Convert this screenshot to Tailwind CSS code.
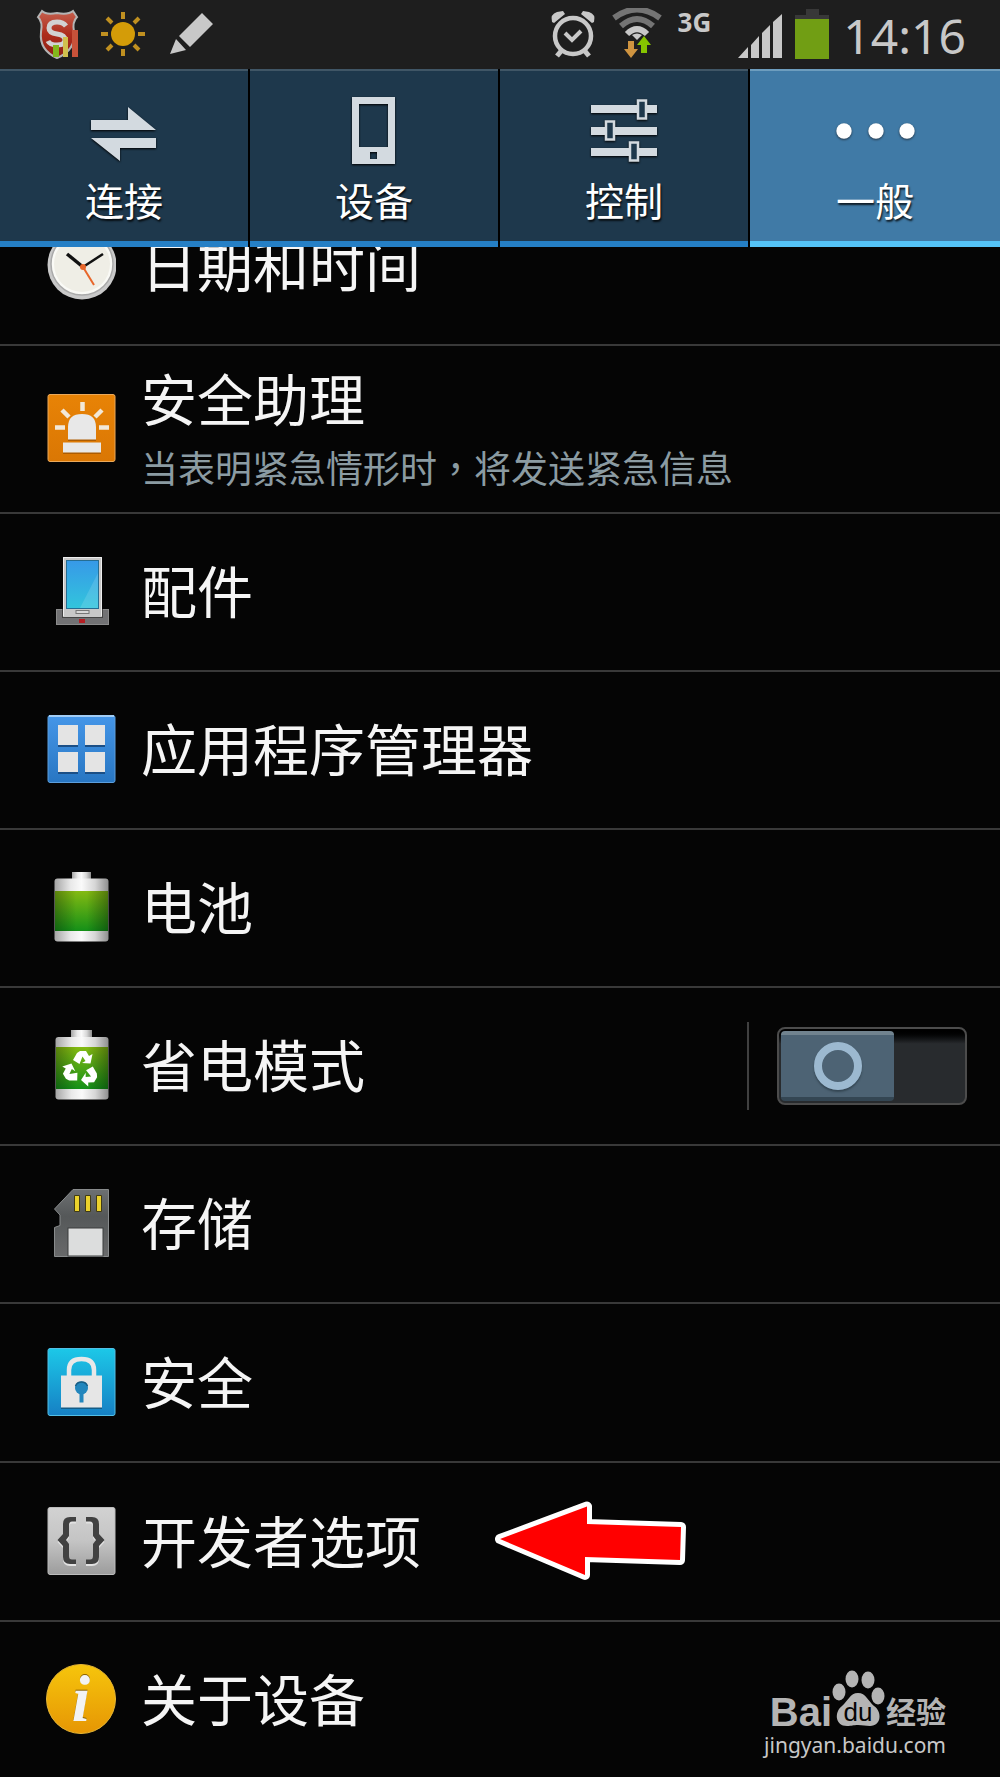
<!DOCTYPE html>
<html lang="zh-CN">
<head>
<meta charset="utf-8">
<meta name="viewport" content="width=device-width, initial-scale=1">
<title>设置</title>
<script src="https://cdn.jsdelivr.net/npm/@tailwindcss/browser@4"></script>
</head>
<body class="bg-[#050505] text-[#f5f5f5] font-['Noto_Sans','Noto_Sans_CJK_SC',sans-serif]">
<div class="relative min-h-screen overflow-hidden">

<!-- Status bar -->
<header class="flex h-[69px] items-start justify-between bg-[#1e1e1e] pl-9 pr-[34px] text-[#c8c8c8]">
  <div class="flex items-center gap-5 pt-2">
    <svg class="h-[52px] w-11" viewBox="0 0 44 52" aria-hidden="true">
      <defs><linearGradient id="shield" x1="0" y1="0" x2="0" y2="1"><stop offset="0" stop-color="#c5604e"/><stop offset=".5" stop-color="#ad2c1c"/><stop offset="1" stop-color="#8c2015"/></linearGradient></defs>
      <path d="M6 3 Q10 7 21 5 Q32 7 37 3 L41 9 Q36 14 38 24 Q40 42 21 50 Q3 42 5 24 Q7 14 2 9Z" fill="url(#shield)" stroke="#b4b4b4" stroke-width="2"/>
      <path d="M30 18 Q27 14 21 14 Q13 14 13 20 Q13 25 21 26 Q29 27 29 32 Q29 37 21 37 Q14 37 12 33" fill="none" stroke="#d2d2d2" stroke-width="5"/>
      <path d="M17 37h6v12h-6z" fill="#83b81c"/><path d="M27 29h5v20h-5z" fill="#d0c04e"/><path d="M36 22h6v27h-6z" fill="#c8523a"/>
    </svg>
    <svg class="h-[52px] w-12" viewBox="0 0 48 52" aria-hidden="true">
      <circle cx="23" cy="26" r="12" fill="#d49c08"/>
      <path d="M23 4v7M23 41v7M1 26h7M38 26h7M7 10l5 5M34 37l5 5M7 42l5-5M34 15l5-5" stroke="#c09020" stroke-width="4"/>
    </svg>
    <svg class="h-[52px] w-12" viewBox="0 0 48 52" aria-hidden="true">
      <path d="M34 5 45 16 22 39 11 28ZM8 31 18 42 2 46Z" fill="#c8c8c8"/>
    </svg>
  </div>
  <div class="flex items-start pt-2">
    <svg class="h-[52px] w-12" viewBox="0 0 48 52" fill="none" stroke="#c8c8c8" aria-hidden="true">
      <circle cx="25" cy="28" r="18" stroke-width="4.500"/>
      <path d="M17 25l7 7 9-9" stroke-width="4"/>
      <path d="M14 42l-5 6M36 42l5 6" stroke-width="5"/>
      <path d="M4 14Q2 6 9 4l6-1 2 3L6 15ZM46 14Q48 6 41 4l-6-1-2 3 11 9Z" fill="#c8c8c8" stroke="none"/>
    </svg>
    <svg class="ml-4 h-[52px] w-[50px]" viewBox="0 0 50 52" fill="none" aria-hidden="true">
      <path d="M2 10Q25-7 48 10" stroke="#747474" stroke-width="6"/>
      <path d="M9 18Q25 4 41 18" stroke="#747474" stroke-width="6"/>
      <path d="M15 26Q25 16 35 26" stroke="#c8c8c8" stroke-width="6"/>
      <path d="M20 27Q25 24 30 27L25 32Z" fill="#c8c8c8"/>
      <path d="M16 33h6v8h4l-7 9-7-9h4z" fill="#cf9440"/>
      <path d="M32 28l7 9h-4v8h-6v-8h-4z" fill="#86c400"/>
    </svg>
    <span class="ml-4 text-[26px] leading-7 font-bold">3G</span>
    <svg class="ml-6 h-[52px] w-12" viewBox="0 0 48 52" fill="#c8c8c8" aria-hidden="true">
      <path d="M3 50 13 39v11ZM16 37 24 28v22h-8ZM27 25 35 17v33h-8ZM38 14 47 6v44h-9Z"/>
    </svg>
    <svg class="ml-3 h-[52px] w-9" viewBox="0 0 36 52" aria-hidden="true">
      <path d="M11 1h13v6h10v4H0V7h11z" fill="#383838"/><path d="M0 11h34v40H0z" fill="#719e14"/>
    </svg>
    <time class="ml-3 text-[48px] leading-[56px]">14:16</time>
  </div>
</header>

<!-- Tabs -->
<nav class="relative z-10 bg-black text-center text-[39px] leading-[48px] text-white text-shadow-[1px_2px_2px_rgb(0_0_0/0.8)]">
  <ul class="grid h-[178px] grid-cols-4">
    <li class="pr-0.5">
      <a href="#connect" class="flex h-full flex-col items-center gap-3 border-t-2 border-b-6 border-t-[#405666] border-b-[#257fc5] bg-[#1e384c] pt-[26px]">
        <svg class="size-[68px] drop-shadow-[0_1px_1px_black]" viewBox="0 0 68 68" fill="#d3dae0" aria-hidden="true"><path d="M1 23h37V10l28 23H1ZM66 41v10H30v13L1 41Z"/></svg>
        <span>连接</span>
      </a>
    </li>
    <li class="pr-0.5">
      <a href="#device" class="flex h-full flex-col items-center gap-3 border-t-2 border-b-6 border-t-[#405666] border-b-[#257fc5] bg-[#1e384c] pt-[26px]">
        <svg class="size-[68px] drop-shadow-[0_1px_1px_black]" viewBox="0 0 68 68" fill="#d3dae0" fill-rule="evenodd" aria-hidden="true"><path d="M12 0h43v67H12ZM19 7v43h29V7ZM30 55v7h7v-7Z"/></svg>
        <span>设备</span>
      </a>
    </li>
    <li class="pr-0.5">
      <a href="#control" class="flex h-full flex-col items-center gap-3 border-t-2 border-b-6 border-t-[#405666] border-b-[#257fc5] bg-[#1e384c] pt-[26px]">
        <svg class="size-[68px] drop-shadow-[0_1px_1px_black]" viewBox="0 0 68 68" aria-hidden="true">
          <path d="M1 8h66v8H1ZM1 30h66v8H1ZM1 51h66v8H1Z" fill="#d3dae0"/>
          <path d="M48 3.500h8v18h-8ZM16 24.500h8v18h-8ZM40 45.500h8v18h-8Z" fill="#1e384c" stroke="#d3dae0" stroke-width="2.500"/>
        </svg>
        <span>控制</span>
      </a>
    </li>
    <li>
      <a href="#general" aria-current="page" class="flex h-full flex-col items-center gap-3 border-t-2 border-b-6 border-t-[#6d9dbe] border-b-[#55c3f6] bg-[#407aa6] pt-[26px]">
        <svg class="h-[68px] w-20 drop-shadow-[0_1px_1px_#234]" viewBox="0 0 80 68" fill="#fff" aria-hidden="true"><circle cx="9" cy="34" r="7.700"/><circle cx="41" cy="34" r="7.700"/><circle cx="72" cy="34" r="7.700"/></svg>
        <span>一般</span>
      </a>
    </li>
  </ul>
</nav>

<!-- Settings list, scrolled so that its first row is partly under the tabs -->
<main>
<ul class="-mt-[59px] text-[56px] leading-[80px]">
  <li class="border-b-2 border-[#393939]">
    <a href="#date" class="flex h-[156px] items-center gap-[25px] pb-0.5 pl-[46px]">
      <svg class="size-[70px]" viewBox="0 0 70 70" aria-hidden="true">
        <circle cx="36" cy="35" r="34.500" fill="#c9c9c9"/><circle cx="36" cy="34" r="31" fill="#fafaf6" stroke="#aaa" stroke-width="1.500"/><circle cx="36" cy="34" r="28" fill="#efeee6"/>
        <path d="M21 24 37 37" stroke="#111" stroke-width="3.500"/><path d="M37 37 57 24" stroke="#111" stroke-width="2.500"/><path d="M37 37 48 55" stroke="#e8662a" stroke-width="2"/><circle cx="37" cy="37" r="3" fill="#e8662a"/>
      </svg>
      <span>日期和时间</span>
    </a>
  </li>
  <li class="border-b-2 border-[#393939]">
    <a href="#assistant" class="flex h-[166px] items-center gap-[25px] pb-0.5 pl-[46px]">
      <svg class="size-[70px]" viewBox="0 0 70 70" aria-hidden="true">
        <defs><linearGradient id="orange" x1="0" y1="0" x2="0" y2="1"><stop offset="0" stop-color="#e88306"/><stop offset="1" stop-color="#da7704"/></linearGradient></defs>
        <rect x="2" y="1.500" width="67" height="67" rx="2" fill="url(#orange)" stroke="#eba95a"/>
        <path d="M22 48V35Q22 22 36 22T50 35V48ZM17 51h38v10H17Z" fill="#8d4a00" opacity=".6"/>
        <path d="M22 46.500V34Q22 21 36 21T50 34V46.500ZM17 49.500h38v10H17Z" fill="#e8e8e8"/>
        <path d="M36.500 9v9M9 34.500h10M53 34.500h10M16 17l7 7M56 17l-7 7" stroke="#f2e8d8" stroke-width="4.500"/>
      </svg>
      <span class="flex flex-col">
        <span>安全助理</span>
        <span class="text-[37px] leading-[56px] text-[#8b9ba2]">当表明紧急情形时<span class="font-['Noto_Sans_CJK_TC',sans-serif]" lang="zh-TW">，</span>将发送紧急信息</span>
      </span>
    </a>
  </li>
  <li class="border-b-2 border-[#393939]">
    <a href="#accessory" class="flex h-[156px] items-center gap-[25px] pb-0.5 pl-[46px]">
      <svg class="size-[70px]" viewBox="0 0 70 70" aria-hidden="true">
        <defs><linearGradient id="screen" x1="0" y1="0" x2="0" y2="1"><stop offset="0" stop-color="#3799e8"/><stop offset="1" stop-color="#32c5dc"/></linearGradient></defs>
        <rect x="10.500" y="53.500" width="52" height="15" fill="#727274" stroke="#8b8b8b"/>
        <rect x="16" y="53" width="41" height="9" fill="#444"/>
        <rect x="17" y="1" width="39" height="60" fill="#c8c8c8"/><path d="M17.500 60V1.500h38V60" fill="none" stroke="#eee"/>
        <rect x="20.500" y="4.500" width="32" height="48" fill="url(#screen)" stroke="#256d93"/>
        <path d="M52 17 34 52H52Z" fill="#fff" opacity=".13"/>
        <rect x="30" y="54.500" width="13" height="3" fill="#d8d8d8" stroke="#777"/>
        <rect x="33" y="63" width="6" height="4" fill="#b51f24"/>
      </svg>
      <span>配件</span>
    </a>
  </li>
  <li class="border-b-2 border-[#393939]">
    <a href="#apps" class="flex h-[156px] items-center gap-[25px] pb-0.5 pl-[46px]">
      <svg class="size-[70px]" viewBox="0 0 70 70" aria-hidden="true">
        <defs><linearGradient id="blue" x1="0" y1="0" x2="0" y2="1"><stop offset="0" stop-color="#4596e8"/><stop offset="1" stop-color="#2876c2"/></linearGradient></defs>
        <rect x="2" y="1.500" width="67" height="67" rx="2" fill="url(#blue)" stroke="#5c9edc"/><path d="M3 2h65" stroke="#a2cdf5" stroke-width="2"/>
        <path d="M12 12h20v21H12ZM39 12h20v21H39ZM12 39h20v21H12ZM39 39h20v21H39Z" fill="#1b4f86"/>
        <path d="M12 11h20v20H12ZM39 11h20v20H39ZM12 38h20v20H12ZM39 38h20v20H39Z" fill="#e4e4e4"/>
      </svg>
      <span>应用程序管理器</span>
    </a>
  </li>
  <li class="border-b-2 border-[#393939]">
    <a href="#battery" class="flex h-[156px] items-center gap-[25px] pb-0.5 pl-[46px]">
      <svg class="size-[70px]" viewBox="0 0 70 70" aria-hidden="true">
        <defs>
          <linearGradient id="metal"><stop offset="0" stop-color="#a5a5a5"/><stop offset=".3" stop-color="#e9e9e9"/><stop offset=".5" stop-color="#fafafa"/><stop offset=".75" stop-color="#d6d6d6"/><stop offset="1" stop-color="#8f8f8f"/></linearGradient>
          <linearGradient id="green" x1="0" y1="0" x2="0" y2="1"><stop offset="0" stop-color="#84ba12"/><stop offset="1" stop-color="#149018"/></linearGradient>
          <linearGradient id="edge"><stop offset="0" stop-color="#000" stop-opacity=".3"/><stop offset=".4" stop-color="#000" stop-opacity="0"/><stop offset=".6" stop-color="#000" stop-opacity="0"/><stop offset="1" stop-color="#000" stop-opacity=".35"/></linearGradient>
        </defs>
        <rect x="26" y="0" width="19" height="9" fill="url(#metal)"/>
        <rect x="8.500" y="6.500" width="54" height="63" rx="3" fill="url(#metal)"/>
        <rect x="9" y="19" width="53" height="40" fill="url(#green)"/><rect x="9" y="19" width="53" height="40" fill="url(#edge)"/>
      </svg>
      <span>电池</span>
    </a>
  </li>
  <li class="flex items-center border-b-2 border-[#393939] pr-[33px]">
    <a href="#power" class="flex h-[156px] flex-1 items-center gap-[25px] pb-0.5 pl-[46px]">
      <svg class="size-[70px]" viewBox="0 0 70 70" aria-hidden="true">
        <rect x="25" y="0" width="21" height="9" fill="url(#metal)"/>
        <rect x="9.500" y="7" width="53" height="62.500" rx="3" fill="url(#metal)"/>
        <rect x="10" y="17" width="52" height="42" fill="url(#green)"/><rect x="10" y="17" width="52" height="42" fill="url(#edge)"/>
        <g fill="#fff">
          <path id="chase" d="M27 30 31 23 34 21H40L43 26 46.500 24 44.500 33.500 36 33 39.500 31 36.500 26.500 33.500 34Z"/>
          <use href="#chase" transform="rotate(120 35 39)"/><use href="#chase" transform="rotate(240 35 39)"/>
        </g>
      </svg>
      <span>省电模式</span>
    </a>
    <label class="flex h-[88px] cursor-pointer items-center border-l-2 border-[#404040] pl-[28px]">
      <input type="checkbox" role="switch" aria-label="省电模式" class="sr-only">
      <span class="flex h-[78px] w-[190px] rounded-lg border-2 border-[#4c4c4c] bg-linear-to-b from-black to-[#282b2e] to-20% p-0.5">
        <span class="flex h-[70px] w-[113px] items-center justify-center rounded-sm border-t-4 border-b-4 border-t-[#71838f] border-b-[#344653] bg-[#4d6374]">
          <span class="size-12 rounded-full border-8 border-[#9cb9d0] shadow-[0_2px_2px_#344653]"></span>
        </span>
      </span>
    </label>
  </li>
  <li class="border-b-2 border-[#393939]">
    <a href="#storage" class="flex h-[156px] items-center gap-[25px] pb-0.5 pl-[46px]">
      <svg class="size-[70px]" viewBox="0 0 70 70" aria-hidden="true">
        <defs><linearGradient id="card" x1="0" y1="0" x2="0" y2="1"><stop offset="0" stop-color="#6d7072"/><stop offset=".4" stop-color="#555859"/><stop offset="1" stop-color="#68696a"/></linearGradient></defs>
        <path d="M27 1.500H62.500V68.500H8.500V39.500L14 37.500V27L8.500 21Z" fill="url(#card)" stroke="#888b8c"/>
        <rect x="22" y="40" width="35" height="28" fill="#dcdddd" stroke="#3a3c3d"/>
        <path d="M28.500 7.500h5v16h-5ZM39.500 7.500h5v16h-5ZM50.500 7.500h5v16h-5Z" fill="#ecd22c" stroke="#413b16"/>
      </svg>
      <span>存储</span>
    </a>
  </li>
  <li class="border-b-2 border-[#393939]">
    <a href="#security" class="flex h-[157px] items-center gap-[25px] pb-0.5 pl-[46px]">
      <svg class="size-[70px]" viewBox="0 0 70 70" aria-hidden="true">
        <defs><linearGradient id="cyan" x1="0" y1="0" x2="0" y2="1"><stop offset="0" stop-color="#1cc8e8"/><stop offset="1" stop-color="#1680c4"/></linearGradient></defs>
        <rect x="2" y="1.500" width="67" height="67" rx="2" fill="url(#cyan)" stroke="#52bfe6"/>
        <rect x="15" y="30" width="41" height="32" fill="#145c86"/>
        <path d="M23 29V23Q23 12 35.500 12T48 23V29" fill="none" stroke="#e8e8e8" stroke-width="4.500"/>
        <rect x="15" y="28.500" width="41" height="32" fill="#e6e6e6"/>
        <circle cx="35.500" cy="41" r="6.500" fill="#2286bd"/><path d="M33.500 44h4v11.500h-4z" fill="#2286bd"/><path d="M29.500 39Q31 35 35.500 35T41.500 39" fill="none" stroke="#175e86" stroke-width="1.500"/>
      </svg>
      <span>安全</span>
    </a>
  </li>
  <li class="border-b-2 border-[#393939]">
    <a href="#developer" class="flex h-[157px] items-center gap-[25px] pb-0.5 pl-[46px]">
      <svg class="size-[70px]" viewBox="0 0 70 70" aria-hidden="true">
        <defs><linearGradient id="silver" x1="0" y1="0" x2="0" y2="1"><stop offset="0" stop-color="#d2d2d2"/><stop offset=".5" stop-color="#c4c4c4"/><stop offset="1" stop-color="#9c9c9c"/></linearGradient></defs>
        <rect x="2" y="1.500" width="67" height="67" rx="2" fill="url(#silver)" stroke="#bcbcbc"/>
        <path fill="#e2e2e2" transform="translate(0 2)" d="M30 11H24Q17 11 17 18V28L11.500 34 17 40V51Q17 58 24 58H30V53.500H26Q23 53.500 23 50V38L20 34 23 30V19Q23 15.500 26 15.500H30ZM40 11H46Q53 11 53 18V28L58.500 34 53 40V51Q53 58 46 58H40V53.500H44Q47 53.500 47 50V38L50 34 47 30V19Q47 15.500 44 15.500H40Z"/>
        <path fill="#414141" d="M30 11H24Q17 11 17 18V28L11.500 34 17 40V51Q17 58 24 58H30V53.500H26Q23 53.500 23 50V38L20 34 23 30V19Q23 15.500 26 15.500H30ZM40 11H46Q53 11 53 18V28L58.500 34 53 40V51Q53 58 46 58H40V53.500H44Q47 53.500 47 50V38L50 34 47 30V19Q47 15.500 44 15.500H40Z"/>
      </svg>
      <span>开发者选项</span>
      <svg class="ml-12 h-20 w-48" viewBox="0 0 192 80" aria-hidden="true">
        <path d="M6 38 93 5.500V23L187 26 186 59 91 56V74Z" fill="#f00" stroke="#fff" stroke-width="10" stroke-linejoin="round" paint-order="stroke"/>
      </svg>
    </a>
  </li>
  <li>
    <a href="#about" class="flex h-[156px] items-center gap-[25px] pb-0.5 pl-[46px]">
      <svg class="size-[70px] overflow-visible" viewBox="0 0 70 70" aria-hidden="true">
        <defs><linearGradient id="gold" x1="0" y1="0" x2="0" y2="1"><stop offset="0" stop-color="#f6c50c"/><stop offset="1" stop-color="#e69604"/></linearGradient></defs>
        <circle cx="35" cy="35" r="34.500" fill="url(#gold)" stroke="#e7b634"/>
        <text x="35" y="57" text-anchor="middle" class="fill-[#f3f3f3] font-['Liberation_Serif',serif] text-[66px] font-bold italic drop-shadow-[0_-1px_0_#8a6200]">i</text>
      </svg>
      <span>关于设备</span>
    </a>
  </li>
</ul>
</main>

<!-- Site watermark -->
<aside class="absolute right-[54px] bottom-5 text-[#b4b4b4]">
  <div class="flex items-end justify-end">
    <span class="font-['Liberation_Sans',sans-serif] text-[40px] leading-10 font-bold">Bai</span>
    <svg class="mb-1 h-[58px] w-[54px]" viewBox="0 0 54 58" fill="#b4b4b4" aria-hidden="true">
      <ellipse cx="7" cy="22" rx="6.500" ry="8.500"/><ellipse cx="20" cy="9" rx="6.500" ry="8.500"/><ellipse cx="36" cy="10" rx="6.500" ry="8.500"/><ellipse cx="46" cy="26" rx="6.500" ry="8.500"/>
      <path d="M26 23C34 23 36 31 42 36C50 41 50 56 38 56C33 56 31 55 26 55S20 56 15 56C3 56 2 42 10 36C16 31 18 23 26 23Z"/>
      <text x="26" y="51" text-anchor="middle" class="fill-[#050505] font-['Liberation_Sans',sans-serif] text-[26px]">du</text>
    </svg>
    <span class="text-[30px] leading-10 font-bold">经验</span>
  </div>
  <div class="text-[21px] leading-[26px] text-[#c8c8c8]">jingyan.baidu.com</div>
</aside>

</div>
</body>
</html>
